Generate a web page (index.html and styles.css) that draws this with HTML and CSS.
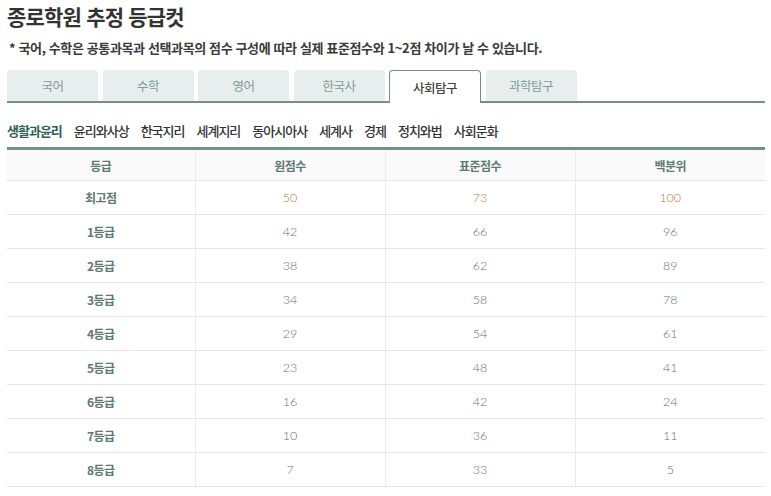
FILE: index.html
```html
<!DOCTYPE html>
<html lang="ko">
<head>
<meta charset="utf-8">
<link rel="stylesheet" href="styles.css">
</head>
<body>
<div class="page">
  <h1 class="title">종로학원 추정 등급컷</h1>
  <p class="note">* 국어, 수학은 공통과목과 선택과목의 점수 구성에 따라 실제 표준점수와 1~2점 차이가 날 수 있습니다.</p>
  <div class="tabs">
    <div class="tab">국어</div>
    <div class="tab">수학</div>
    <div class="tab">영어</div>
    <div class="tab">한국사</div>
    <div class="tab active">사회탐구</div>
    <div class="tab">과학탐구</div>
  </div>
  <div class="subnav">
    <span class="sub on">생활과윤리</span>
    <span class="sub">윤리와사상</span>
    <span class="sub">한국지리</span>
    <span class="sub">세계지리</span>
    <span class="sub">동아시아사</span>
    <span class="sub">세계사</span>
    <span class="sub">경제</span>
    <span class="sub">정치와법</span>
    <span class="sub">사회문화</span>
  </div>
  <table class="grade">
    <thead>
      <tr><th>등급</th><th>원점수</th><th>표준점수</th><th>백분위</th></tr>
    </thead>
    <tbody>
      <tr class="top"><th>최고점</th><td>50</td><td>73</td><td>100</td></tr>
      <tr><th>1등급</th><td>42</td><td>66</td><td>96</td></tr>
      <tr><th>2등급</th><td>38</td><td>62</td><td>89</td></tr>
      <tr><th>3등급</th><td>34</td><td>58</td><td>78</td></tr>
      <tr><th>4등급</th><td>29</td><td>54</td><td>61</td></tr>
      <tr><th>5등급</th><td>23</td><td>48</td><td>41</td></tr>
      <tr><th>6등급</th><td>16</td><td>42</td><td>24</td></tr>
      <tr><th>7등급</th><td>10</td><td>36</td><td>11</td></tr>
      <tr><th>8등급</th><td>7</td><td>33</td><td>5</td></tr>
    </tbody>
  </table>
</div>
</body>
</html>
```
FILE: styles.css
```css
* { box-sizing: border-box; }
html, body { margin: 0; padding: 0; background: #fff; }
body {
  font-family: "Noto Sans CJK KR", "Noto Sans", sans-serif;
  color: #333;
}
.page {
  width: 765px;
  padding: 4px 0 0 7px;
}
.title {
  margin: 0;
  font-size: 21px;
  line-height: 24px;
  font-weight: 700;
  letter-spacing: -0.8px;
  color: #333;
}
.note {
  margin: 11px 0 0 2px;
  font-size: 13px;
  line-height: 18px;
  font-weight: 700;
  letter-spacing: -0.38px;
  color: #3a3a3a;
}
.tabs {
  margin-top: 13px;
  display: flex;
  gap: 4.5px;
  border-bottom: 2px solid #728f88;
  height: 33px;
}
.tab {
  width: 91px;
  height: 31px;
  background: #e8eeee;
  border-radius: 4px 4px 0 0;
  display: flex;
  align-items: center;
  justify-content: center;
  font-size: 12.5px;
  letter-spacing: -0.5px;
  color: #7f9c95;
}
.tab.active {
  width: 92px;
  height: 33px;
  background: #fff;
  border: 1px solid #728f88;
  border-bottom: none;
  color: #444;
  font-weight: 500;
  margin-bottom: -2px;
}
.subnav {
  margin-top: 19px;
  display: flex;
  gap: 12px;
  font-size: 13px;
  line-height: 18px;
  letter-spacing: -1px;
  color: #333;
  font-weight: 500;
}
.sub.on {
  font-weight: 700;
  color: #2f5f56;
}
.grade {
  margin-top: 7px;
  width: 758px;
  border-collapse: collapse;
  border-top: 3px solid #728f88;
  table-layout: fixed;
}
.grade th, .grade td {
  text-align: center;
  border-bottom: 1px solid #e6e6e6;
  border-right: 1px solid #ececec;
  height: 34px;
  padding: 0;
  font-size: 12px;
}
.grade th:last-child, .grade td:last-child { border-right: none; }
.grade thead th {
  height: 32px;
  background: #fafafa;
  color: #5c7b73;
  font-weight: 700;
  letter-spacing: -0.5px;
}
.grade tbody th {
  color: #5c7a72;
  font-weight: 700;
  letter-spacing: -0.5px;
}
.grade td {
  font-family: "Lato", "Liberation Sans", sans-serif;
  font-weight: 300;
  color: #6e6e6e;
  font-size: 12.5px;
}
.grade tr.top td { color: #c4773c; }
.grade th:first-child { width: 188px; }
```
